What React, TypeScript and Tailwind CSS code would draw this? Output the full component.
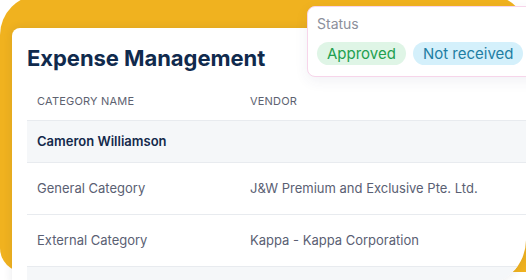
import React from "react";

const rows = [
  { cat: "General Category", vendor: "J&W Premium and Exclusive Pte. Ltd." },
  { cat: "External Category", vendor: "Kappa - Kappa Corporation" },
];

export default function App() {
  return (
    <div
      className="relative w-[526px] h-[280px] overflow-hidden bg-white"
      style={{ fontFamily: "Inter, 'Noto Sans', sans-serif" }}
    >
      <div className="mt-[-5px] h-[277px] w-[528px] rounded-tl-[40px] rounded-tr-[40px] rounded-bl-[24px] bg-[#f0b21f] pl-[12px] pt-[33px]">
        <div className="w-[514px] h-[257px] overflow-hidden rounded-tl-[8px] rounded-br-[45px] bg-white shadow-[0_0_10px_rgba(30,40,60,0.10)] pt-[16px]">
          <h1 className="pl-[15px] text-[22px] leading-[28px] font-bold text-[#102a4d] tracking-[-0.05px]">
            Expense Management
          </h1>
          <div className="ml-[15px] mt-[10px]">
            <div className="flex h-[38px] items-center text-[11px] text-[#5d6270] tracking-[0.2px]">
              <div className="w-[223px] pl-[10px]">CATEGORY NAME</div>
              <div>VENDOR</div>
            </div>
            <div className="flex h-[43px] items-center border-y border-[#e8ebef] bg-[#f5f7f9] pl-[10px] text-[13px] font-semibold text-[#13294b]">
              Cameron Williamson
            </div>
            {rows.map((r) => (
              <div
                key={r.cat}
                className="flex h-[52px] items-center border-b border-[#e8ebef] text-[13px] text-[#5a6073]"
              >
                <div className="w-[223px] pl-[10px]">{r.cat}</div>
                <div>{r.vendor}</div>
              </div>
            ))}
            <div className="h-[40px] bg-[#f5f7f9]" />
          </div>
        </div>
      </div>

      <div className="absolute left-[307px] top-[6px] w-[260px] h-[71px] rounded-[8px] border border-[#f7d5ea] bg-white pl-[9px] pt-[7px] shadow-[0_4px_14px_rgba(60,60,110,0.07)]">
        <div className="text-[14px] leading-[20px] text-[#8c8f9b]">Status</div>
        <div className="mt-[8px] flex gap-[7px] whitespace-nowrap">
          <span className="shrink-0 h-[23px] rounded-full bg-[#dff5e6] px-[10px] text-[15px] leading-[23px] text-[#22a04f]">
            Approved
          </span>
          <span className="shrink-0 h-[23px] rounded-full bg-[#d4f0fb] px-[10px] text-[15px] leading-[23px] text-[#1f7ea3]">
            Not received
          </span>
          <span className="shrink-0 h-[23px] w-[60px] rounded-full bg-[#eef0f3]" />
        </div>
      </div>
    </div>
  );
}
